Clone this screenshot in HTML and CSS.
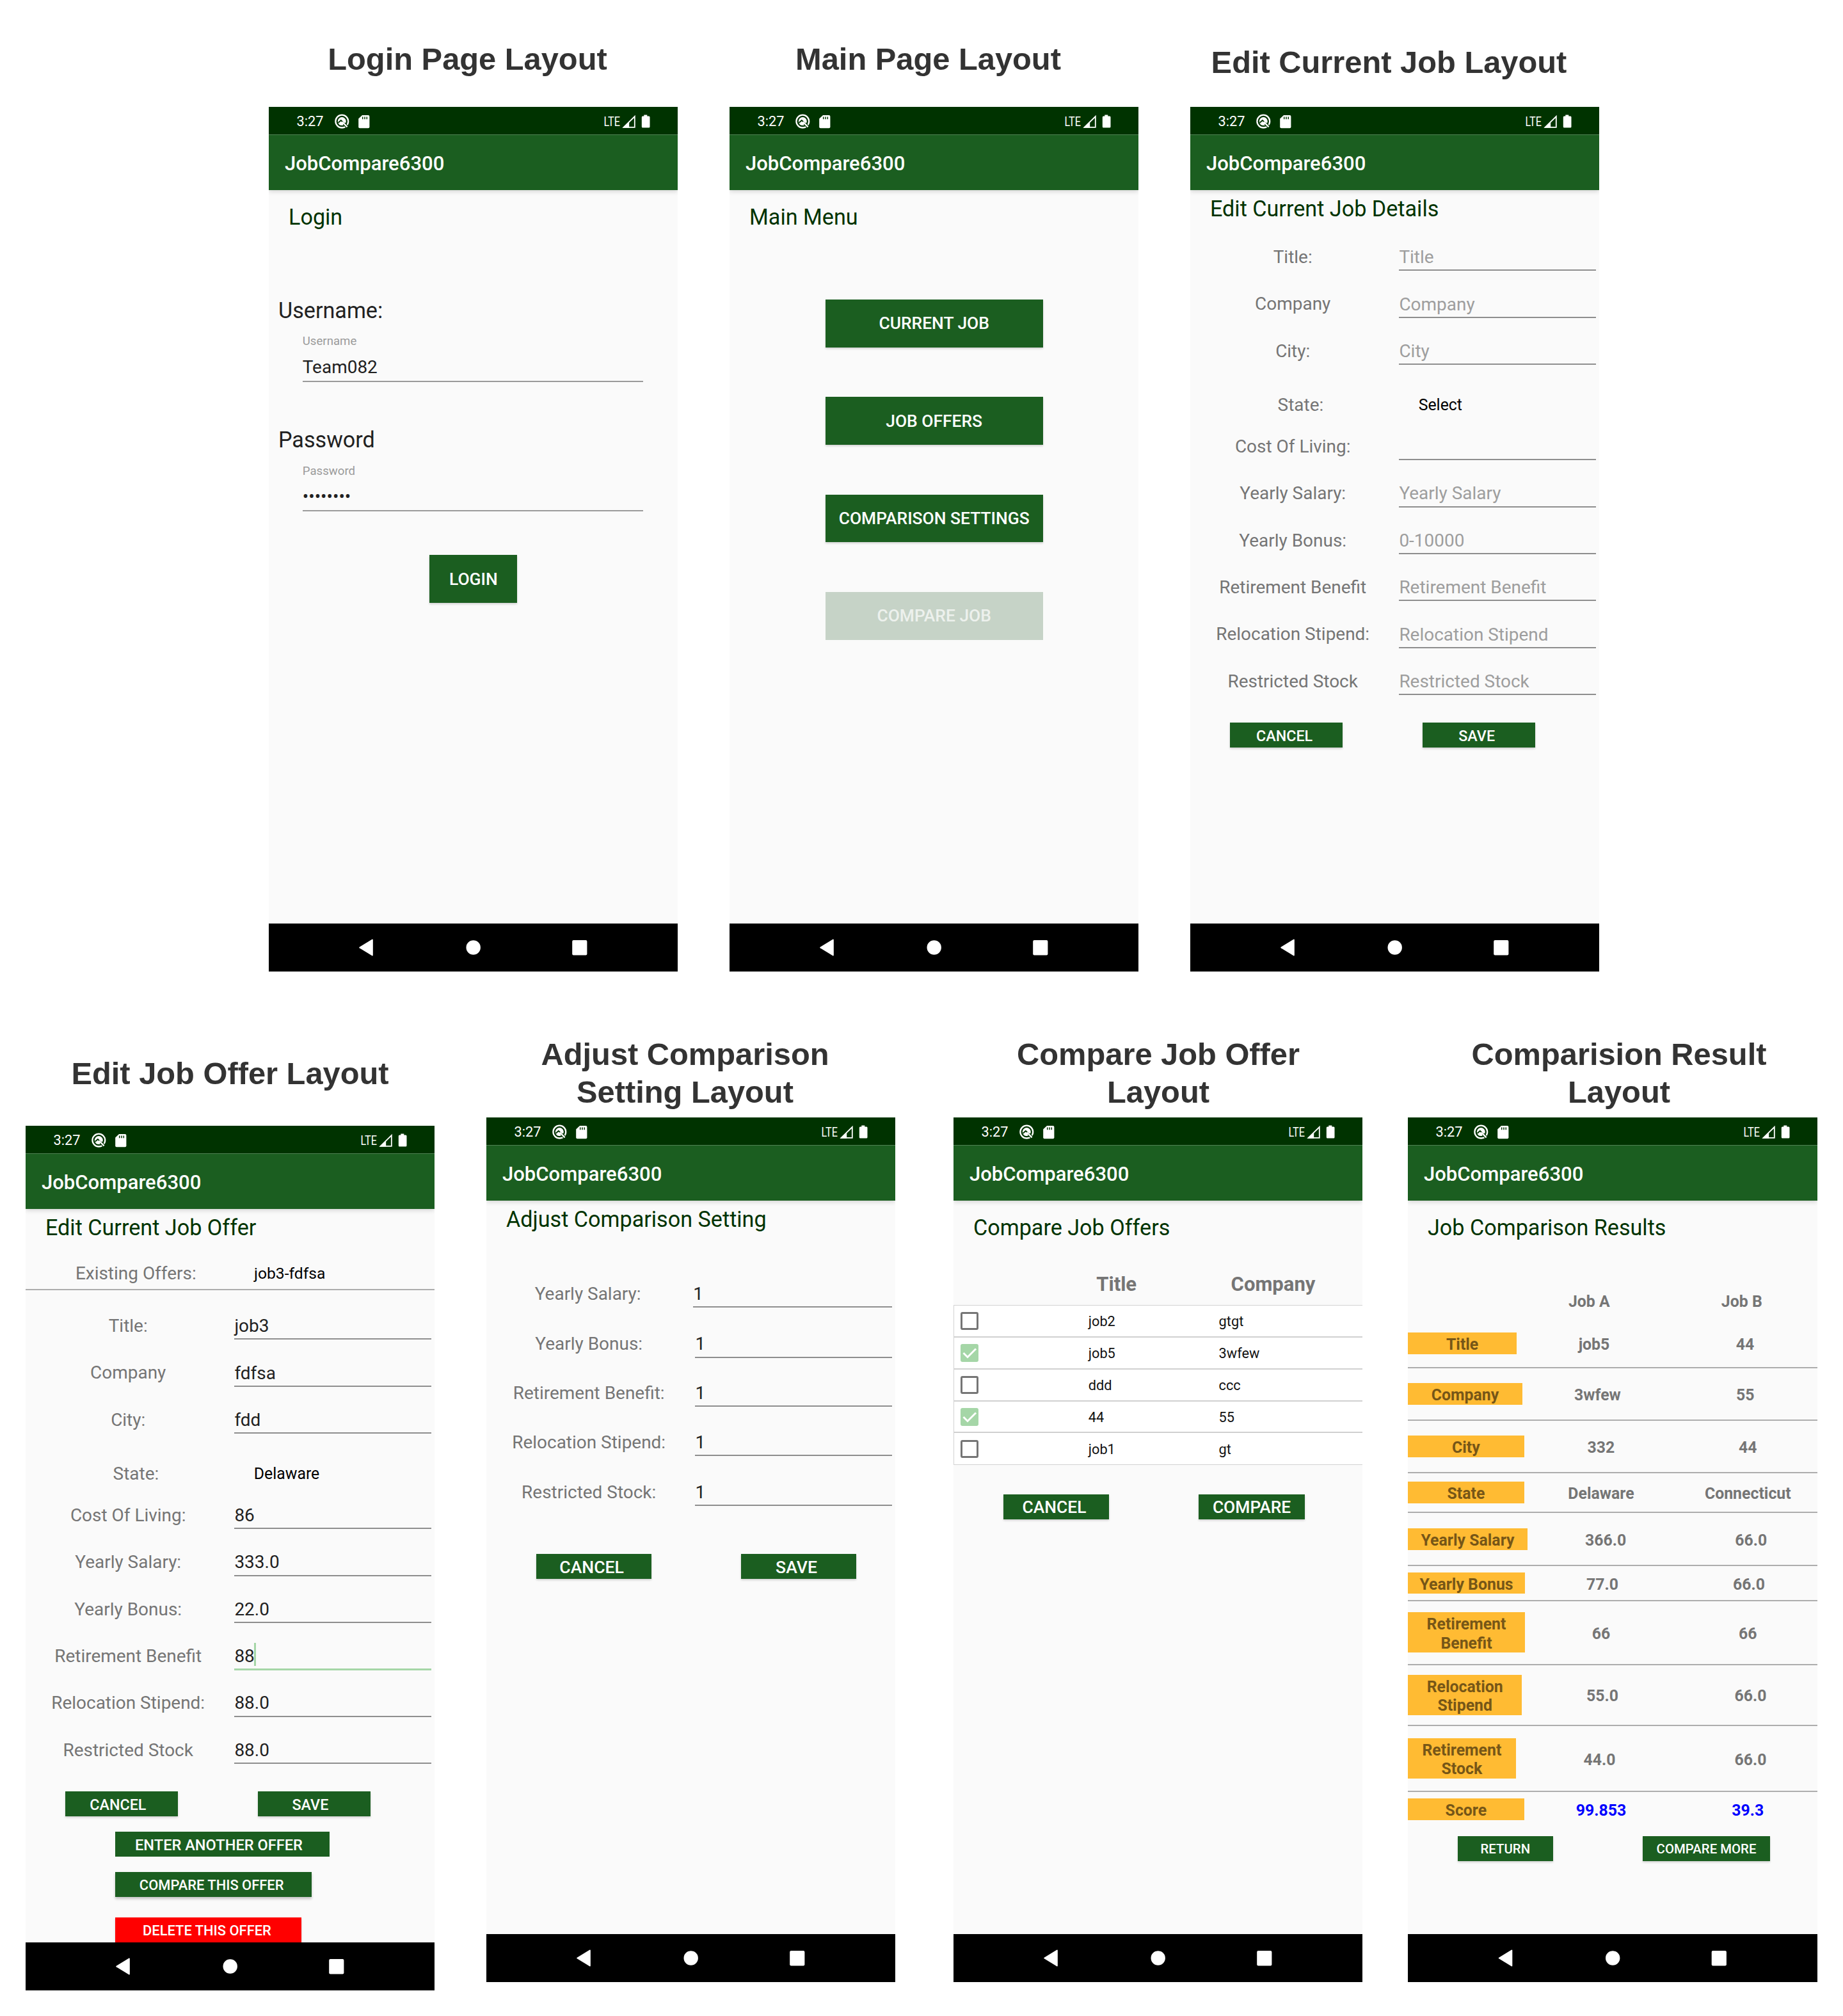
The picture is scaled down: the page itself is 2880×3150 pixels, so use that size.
FILE: index.html
```html
<!DOCTYPE html>
<html lang="en">
<head>
<meta charset="utf-8">
<title>JobCompare6300 layouts</title>
<link rel="stylesheet" href="styles.css">
</head>
<body>
<svg class="defs" width="0" height="0" aria-hidden="true">
  <symbol id="status-icons" viewBox="0 0 60 44">
    <circle cx="14.3" cy="22.6" r="9.900" fill="none" stroke="#fff" stroke-width="2.300"/>
    <circle cx="14.3" cy="22.6" r="6.500" fill="#fff"/>
    <path d="M17.500 26l6 6.500" fill="none" stroke="#030" stroke-width="4.600"/>
    <path d="M8.600 24.800l4.200-3.800 5 4.600" fill="none" stroke="#030" stroke-width="1.900"/>
    <path d="M14.800 23.200l7.800 8.200" fill="none" stroke="#fff" stroke-width="2.300"/>
    <path d="M46 13h9.4a2 2 0 0 1 2 2v16.200a2 2 0 0 1-2 2H42.200a2 2 0 0 1-2-2V18.600z" fill="#fff"/>
    <path d="M46.700 15.400v3.800M50 15.400v3.800M53.300 15.400v3.800" stroke="#030" stroke-width="1.500"/>
  </symbol>
  <symbol id="signal-icons" viewBox="0 0 76 44">
    <text x="0.500" y="29.900" font-family="Roboto, sans-serif" font-size="20" fill="#fff" textLength="25.500" lengthAdjust="spacingAndGlyphs">LTE</text>
    <path d="M31.500 31.900L48.800 15V31.900z" fill="none" stroke="#fff" stroke-width="1.800"/>
    <path d="M30 32.800L40.200 22.800V32.800z" fill="#fff"/>
    <path d="M63.300 12.400h5v2.200h2.700a1.500 1.500 0 0 1 1.500 1.500v15a1.500 1.500 0 0 1-1.500 1.500H61.300a1.500 1.500 0 0 1-1.500-1.500v-15a1.500 1.500 0 0 1 1.500-1.500h2z" fill="#fff"/>
  </symbol>
  <symbol id="nav-icons" viewBox="0 0 639 75">
    <path d="M162.800 25.500v24a1 1 0 0 1-1.500 .8l-19.600-12a1 1 0 0 1 0-1.600l19.600-12a1 1 0 0 1 1.500 .8z" fill="#fff"/>
    <circle cx="319.700" cy="37.500" r="11.200" fill="#fff"/>
    <rect x="474.200" y="26" width="23.200" height="23.400" rx="2" fill="#fff"/>
  </symbol>
</svg>

<main class="board">
  <div class="row row-top">
    <section class="layout">
      <h2 class="caption">Login Page Layout</h2>
      <div class="phone">
        <div class="status"><span class="clock">3:27</span><svg class="status-left"><use href="#status-icons"/></svg><svg class="status-right"><use href="#signal-icons"/></svg></div>
        <div class="appbar">JobCompare6300</div>
        <div class="content">
          <h3 class="heading heading-tall">Login</h3>
          <div class="login-label">Username:</div>
          <div class="login-field"><span class="hint">Username</span><span class="login-value">Team082</span></div>
          <div class="login-label login-label-second">Password</div>
          <div class="login-field"><span class="hint">Password</span><span class="login-value">••••••••</span></div>
          <button class="btn btn-login">LOGIN</button>
        </div>
        <svg class="nav"><use href="#nav-icons"/></svg>
      </div>
    </section>

    <section class="layout">
      <h2 class="caption">Main Page Layout</h2>
      <div class="phone">
        <div class="status"><span class="clock">3:27</span><svg class="status-left"><use href="#status-icons"/></svg><svg class="status-right"><use href="#signal-icons"/></svg></div>
        <div class="appbar">JobCompare6300</div>
        <div class="content">
          <h3 class="heading heading-tall">Main Menu</h3>
          <div class="menu">
            <button class="btn btn-menu">CURRENT JOB</button>
            <button class="btn btn-menu">JOB OFFERS</button>
            <button class="btn btn-menu">COMPARISON SETTINGS</button>
            <button class="btn btn-menu btn-disabled">COMPARE JOB</button>
          </div>
        </div>
        <svg class="nav"><use href="#nav-icons"/></svg>
      </div>
    </section>

    <section class="layout">
      <h2 class="caption caption-low">Edit Current Job Layout</h2>
      <div class="phone">
        <div class="status"><span class="clock">3:27</span><svg class="status-left"><use href="#status-icons"/></svg><svg class="status-right"><use href="#signal-icons"/></svg></div>
        <div class="appbar">JobCompare6300</div>
        <div class="content">
          <h3 class="heading">Edit Current Job Details</h3>
          <div class="form">
            <div class="field"><span class="label">Title:</span><span class="input placeholder">Title</span></div>
            <div class="field"><span class="label">Company</span><span class="input placeholder">Company</span></div>
            <div class="field"><span class="label">City:</span><span class="input placeholder">City</span></div>
            <div class="field field-state"><span class="label">State:</span><span class="select">Select</span></div>
            <div class="field"><span class="label">Cost Of Living:</span><span class="input"></span></div>
            <div class="field"><span class="label">Yearly Salary:</span><span class="input placeholder">Yearly Salary</span></div>
            <div class="field"><span class="label">Yearly Bonus:</span><span class="input placeholder">0-10000</span></div>
            <div class="field"><span class="label">Retirement Benefit</span><span class="input placeholder">Retirement Benefit</span></div>
            <div class="field"><span class="label">Relocation Stipend:</span><span class="input placeholder">Relocation Stipend</span></div>
            <div class="field"><span class="label">Restricted Stock</span><span class="input placeholder">Restricted Stock</span></div>
          </div>
          <div class="actions actions-edit">
            <button class="btn btn-edit btn-edit-current">CANCEL</button>
            <button class="btn btn-edit btn-edit-current">SAVE</button>
          </div>
        </div>
        <svg class="nav"><use href="#nav-icons"/></svg>
      </div>
    </section>
  </div>

  <div class="row row-bottom">
    <section class="layout layout-offer">
      <h2 class="caption caption-offer">Edit Job Offer Layout</h2>
      <div class="phone">
        <div class="status"><span class="clock">3:27</span><svg class="status-left"><use href="#status-icons"/></svg><svg class="status-right"><use href="#signal-icons"/></svg></div>
        <div class="appbar">JobCompare6300</div>
        <div class="content">
          <h3 class="heading">Edit Current Job Offer</h3>
          <div class="existing"><span class="existing-label">Existing Offers:</span><span class="existing-value">job3-fdfsa</span></div>
          <div class="form">
            <div class="field"><span class="label">Title:</span><span class="input">job3</span></div>
            <div class="field"><span class="label">Company</span><span class="input">fdfsa</span></div>
            <div class="field"><span class="label">City:</span><span class="input">fdd</span></div>
            <div class="field field-state"><span class="label">State:</span><span class="select">Delaware</span></div>
            <div class="field"><span class="label">Cost Of Living:</span><span class="input">86</span></div>
            <div class="field"><span class="label">Yearly Salary:</span><span class="input">333.0</span></div>
            <div class="field"><span class="label">Yearly Bonus:</span><span class="input">22.0</span></div>
            <div class="field"><span class="label">Retirement Benefit</span><span class="input input-active">88<i class="caret"></i></span></div>
            <div class="field"><span class="label">Relocation Stipend:</span><span class="input">88.0</span></div>
            <div class="field"><span class="label">Restricted Stock</span><span class="input">88.0</span></div>
          </div>
          <div class="actions actions-edit">
            <button class="btn btn-edit btn-edit-offer">CANCEL</button>
            <button class="btn btn-edit btn-edit-offer">SAVE</button>
          </div>
          <div class="offer-actions">
            <button class="btn btn-enter">ENTER ANOTHER OFFER</button>
            <button class="btn btn-compare-this">COMPARE THIS OFFER</button>
            <button class="btn btn-delete">DELETE THIS OFFER</button>
          </div>
        </div>
        <svg class="nav"><use href="#nav-icons"/></svg>
      </div>
    </section>

    <section class="layout">
      <h2 class="caption">Adjust Comparison<br>Setting Layout</h2>
      <div class="phone">
        <div class="status"><span class="clock">3:27</span><svg class="status-left"><use href="#status-icons"/></svg><svg class="status-right"><use href="#signal-icons"/></svg></div>
        <div class="appbar">JobCompare6300</div>
        <div class="content">
          <h3 class="heading">Adjust Comparison Setting</h3>
          <div class="form form-settings">
            <div class="field set-salary"><span class="label">Yearly Salary:</span><span class="input">1</span></div>
            <div class="field set-bonus"><span class="label">Yearly Bonus:</span><span class="input">1</span></div>
            <div class="field set-retirement"><span class="label">Retirement Benefit:</span><span class="input">1</span></div>
            <div class="field set-relocation"><span class="label">Relocation Stipend:</span><span class="input">1</span></div>
            <div class="field set-stock"><span class="label">Restricted Stock:</span><span class="input">1</span></div>
          </div>
          <div class="actions actions-settings">
            <button class="btn btn-settings">CANCEL</button>
            <button class="btn btn-settings">SAVE</button>
          </div>
        </div>
        <svg class="nav"><use href="#nav-icons"/></svg>
      </div>
    </section>

    <section class="layout">
      <h2 class="caption caption-center">Compare Job Offer<br>Layout</h2>
      <div class="phone">
        <div class="status"><span class="clock">3:27</span><svg class="status-left"><use href="#status-icons"/></svg><svg class="status-right"><use href="#signal-icons"/></svg></div>
        <div class="appbar">JobCompare6300</div>
        <div class="content">
          <h3 class="heading heading-tall">Compare Job Offers</h3>
          <div class="offers-head"><span>Title</span><span>Company</span></div>
          <div class="offers">
            <div class="offer"><span class="box"></span><span>job2</span><span>gtgt</span></div>
            <div class="offer"><span class="box box-on"><svg viewBox="0 0 28 28"><path d="M4.500 14l6.500 6.500L24 7.500" fill="none" stroke="#fff" stroke-width="3"/></svg></span><span>job5</span><span>3wfew</span></div>
            <div class="offer"><span class="box"></span><span>ddd</span><span>ccc</span></div>
            <div class="offer"><span class="box box-on"><svg viewBox="0 0 28 28"><path d="M4.500 14l6.500 6.500L24 7.500" fill="none" stroke="#fff" stroke-width="3"/></svg></span><span>44</span><span>55</span></div>
            <div class="offer"><span class="box"></span><span>job1</span><span>gt</span></div>
          </div>
          <div class="actions actions-compare">
            <button class="btn btn-compare btn-compare-cancel">CANCEL</button>
            <button class="btn btn-compare">COMPARE</button>
          </div>
        </div>
        <svg class="nav"><use href="#nav-icons"/></svg>
      </div>
    </section>

    <section class="layout">
      <h2 class="caption caption-right">Comparision Result<br>Layout</h2>
      <div class="phone phone-wide">
        <div class="status"><span class="clock">3:27</span><svg class="status-left"><use href="#status-icons"/></svg><svg class="status-right"><use href="#signal-icons"/></svg></div>
        <div class="appbar">JobCompare6300</div>
        <div class="content">
          <h3 class="heading heading-tall">Job Comparison Results</h3>
          <div class="result-head"><span>Job A</span><span>Job B</span></div>
          <div class="result r-title"><span class="tag">Title</span><span>job5</span><span>44</span></div>
          <div class="result r-company"><span class="tag">Company</span><span>3wfew</span><span>55</span></div>
          <div class="result r-city"><span class="tag">City</span><span>332</span><span>44</span></div>
          <div class="result r-state"><span class="tag">State</span><span>Delaware</span><span>Connecticut</span></div>
          <div class="result r-salary"><span class="tag">Yearly Salary</span><span>366.0</span><span>66.0</span></div>
          <div class="result r-bonus"><span class="tag">Yearly Bonus</span><span>77.0</span><span>66.0</span></div>
          <div class="result r-retirement"><span class="tag">Retirement<br>Benefit</span><span>66</span><span>66</span></div>
          <div class="result r-relocation"><span class="tag">Relocation<br>Stipend</span><span>55.0</span><span>66.0</span></div>
          <div class="result r-stock"><span class="tag">Retirement<br>Stock</span><span>44.0</span><span>66.0</span></div>
          <div class="result r-score"><span class="tag">Score</span><span>99.853</span><span>39.3</span></div>
          <div class="actions actions-result">
            <button class="btn btn-return">RETURN</button>
            <button class="btn btn-more">COMPARE MORE</button>
          </div>
        </div>
        <svg class="nav"><use href="#nav-icons"/></svg>
      </div>
    </section>
  </div>
</main>
</body>
</html>
```

FILE: styles.css
```css
* { box-sizing: border-box; }

body {
  margin: 0;
  background: #fff;
  font-family: Roboto, sans-serif;
}

.defs { display: none; }

.board { width: 2880px; height: 3150px; overflow: hidden; }

.row { display: grid; }

.row-top {
  grid-template-columns: 720px 720px 640px;
  padding-left: 420px;
  height: 1618px;
}

.row-bottom {
  grid-template-columns: 720px 730px 710px 640px;
  padding-left: 40px;
}

/* Captions over each phone */
.caption {
  margin: 0;
  width: 621px;
  color: #333;
  font: bold 48.8px/58.67px "Liberation Sans", Arial, sans-serif;
  text-align: center;
  white-space: nowrap;
}

.row-top .caption { height: 167px; padding-top: 63px; }
.row-top .caption-low { padding-top: 68px; }
.row-bottom .caption { height: 128px; }
.row-bottom .caption-offer { width: 639px; height: 141px; padding-top: 30px; }
.row-bottom .caption-center { width: 640px; }
.row-bottom .caption-right { width: 660px; }

/* Phone frame */
.phone {
  display: flex;
  flex-direction: column;
  width: 639px;
  height: 1351px;
  background: #fafafa;
}

.phone-wide { width: 640px; }

.status {
  display: flex;
  align-items: center;
  flex: none;
  height: 43.3px;
  padding-left: 43.5px;
  background: #030;
  color: #fff;
}

.clock { width: 56.5px; font-size: 21.75px; line-height: 46px; padding-top: 3px; }
.status-left { width: 60px; height: 44px; }
.status-right { width: 76px; height: 44px; margin-left: auto; margin-right: 40px; }

.appbar {
  position: relative;
  flex: none;
  height: 86.7px;
  padding-left: 25px;
  background: #1b5e20;
  box-shadow: 0 2px 7px rgba(0, 0, 0, .16);
  clip-path: inset(0 0 -14px 0);
  color: #fff;
  font-size: 31.06px;
  font-weight: 500;
  line-height: 91px;
}

.content { height: 1146px; overflow: hidden; flex: 1; }
.nav { flex: none; width: 639px; height: 75px; background: #000; }
.phone-wide .nav { width: 640px; }

.heading {
  margin: 0;
  height: 53.1px;
  padding: 5px 0 0 31px;
  color: #030;
  font-size: 34.17px;
  font-weight: 400;
  line-height: 49.6px;
}

.heading-tall { height: 66px; padding-top: 17.6px; }

/* Buttons */
.btn {
  display: block;
  margin: 0;
  padding: 0;
  border: 0;
  background: #1b5e20;
  box-shadow: 0 2px 3px rgba(0, 0, 0, .16);
  color: #fff;
  font-family: Roboto, sans-serif;
  font-weight: 500;
  white-space: nowrap;
}

.actions { display: flex; }
.actions .btn,
.offer-actions .btn { padding-top: 2px; }

/* Login */
.login-label {
  margin-top: 100px;
  height: 44px;
  padding-left: 15px;
  color: #212121;
  font-size: 34.17px;
  line-height: 44px;
}

.login-label-second { margin-top: 68.4px; }

.login-field {
  display: flex;
  flex-direction: column;
  width: 532.2px;
  height: 90px;
  margin-left: 52.8px;
  border-bottom: 2px solid #9a9a9a;
  color: #212121;
}

.hint { height: 52px; padding-top: 13.2px; color: #9b9b9b; font-size: 18.64px; line-height: 27px; }
.login-value { margin-top: -5px; font-size: 27.96px; line-height: 42px; }

.btn-login { width: 137px; height: 74.6px; margin: 68px 0 0 251.4px; font-size: 26.4px; }

/* Main menu */
.menu {
  display: flex;
  flex-direction: column;
  gap: 77.8px;
  margin: 105px 0 0 149.6px;
  width: 340.2px;
}

.btn-menu { height: 74.6px; font-size: 26.4px; }
.btn-disabled { background: #c6d3c7; box-shadow: none; color: #edf1ed; }

/* Forms */
.field {
  display: flex;
  align-items: flex-end;
  height: 73.4px;
  font-size: 27.96px;
  line-height: 40.6px;
}

.label { width: 326.4px; padding: 0 6px .8px 0; color: #757575; text-align: center; white-space: nowrap; }

.input {
  display: flex;
  align-items: center;
  width: 307.2px;
  height: 42.6px;
  padding-top: 2.6px;
  border-bottom: 2px solid #8e8e8e;
  color: #212121;
}

.placeholder { color: #9e9e9e; }
.input-active { height: 43.1px; margin-bottom: -.5px; border-bottom: 3px solid #a5d6a7; }
.caret { width: 3px; height: 36px; margin: 0 0 6px -1px; background: #a5d6a7; }

.field-state { height: 75.6px; line-height: 27.2px; }
.field-state .label { padding: 0 0 0 18.4px; }
.select { padding-left: 30.3px; color: #000; font-size: 24.85px; }

.actions-edit { margin: 43.2px 0 0 62px; gap: 124.4px; }
.btn-edit { width: 176.2px; height: 38.8px; font-size: 23.3px; }
.btn-edit-current { padding-right: 6px; }
.btn-edit-offer { padding-right: 11.5px; }

.existing {
  display: flex;
  height: 74.3px;
  margin-bottom: 3.7px;
  padding-top: 21.8px;
  border-bottom: 2px solid #adadad;
  font-size: 27.96px;
  line-height: 52px;
}

.existing-label { width: 357px; padding-right: 12.4px; color: #757575; text-align: center; }
.existing-value { color: #000; font-size: 24.7px; }

.offer-actions { padding: 24px 0 0 139.8px; }
.btn-enter { width: 335.3px; height: 38.8px; padding-right: 11px; box-shadow: none; font-size: 23.6px; }
.btn-compare-this { width: 307.2px; height: 38.8px; margin-top: 24px; padding-right: 5.5px; font-size: 21.9px; box-shadow: 0 3px 4px rgba(0, 0, 0, .22); }
.btn-delete { width: 290.8px; height: 39px; margin-top: 32px; padding-right: 3.5px; background: #f00; font-size: 21.9px; }

/* Comparison settings */
.set-salary { height: 113.9px; }
.set-salary .label { width: 323.3px; padding-right: 6px; }
.set-salary .input { width: 310.3px; }
.set-bonus { height: 78.6px; }
.set-retirement { height: 76.4px; }
.set-relocation { height: 77px; }
.set-stock { height: 78.5px; }

.actions-settings { margin: 74.2px 0 0 77.8px; gap: 139.7px; }
.btn-settings { width: 180.2px; height: 39px; padding-right: 6.5px; font-size: 26.6px; }

/* Offer list */
.offers-head {
  display: flex;
  height: 97.3px;
  padding-left: 223.2px;
  color: #757575;
  font-size: 31.06px;
  font-weight: 700;
  line-height: 129px;
}

.offers-head span:first-child { width: 210.4px; }

.offers {
  background: #fff;
  border: 1px solid #d2d2d2;
  border-width: 1.5px 0 1.5px 1px;
}

.offer {
  display: grid;
  grid-template-columns: 199.8px 203.8px 1fr;
  align-items: center;
  height: 49.8px;
  padding-left: 10px;
  border-bottom: 2px solid #d0d0d0;
  color: #111;
  font-size: 21.75px;
}

.offer span:not(.box) { padding-top: 1.5px; }
.offer:last-child { border-bottom: 0; height: 48.5px; }
.box { display: block; width: 28px; height: 28px; border: 3px solid #757575; border-radius: 3px; }
.box-on { border: 0; background: #a5d6a7; }
.box-on svg { display: block; width: 28px; height: 28px; }

.actions-compare { margin: 45.8px 0 0 77.6px; gap: 139.8px; }
.btn-compare { width: 165.8px; height: 38.8px; font-size: 26.4px; }
.btn-compare-cancel { padding-right: 6px; }

/* Comparison results */
.result-head {
  display: grid;
  grid-template-columns: 239px 238px;
  height: 120.1px;
  padding-left: 163.8px;
  color: #757575;
  font-size: 24.85px;
  font-weight: 700;
  line-height: 183px;
  text-align: center;
}

.result {
  display: grid;
  align-items: center;
  border-bottom: 2px solid #adadad;
  color: #757575;
  font-size: 24.85px;
  font-weight: 700;
  line-height: 29.2px;
  text-align: center;
}

.result > span { padding: 4px 0 .6px; }
.result > .tag { background: #fb3; color: #765617; }

.r-title { grid-template-columns: 170.2px 241.6px 230.4px; height: 75.5px; }
.r-company { grid-template-columns: 179px 235px 226.6px; height: 82.6px; }
.r-city { grid-template-columns: 181.8px 240.4px 218.2px; height: 81.6px; }
.r-state { grid-template-columns: 181.8px 240.4px 218.2px; height: 62.6px; }
.r-salary { grid-template-columns: 187px 244.4px 209.8px; height: 82.6px; }
.r-bonus { grid-template-columns: 183px 242px 216px; height: 55px; }
.r-retirement { grid-template-columns: 183px 238px 220.6px; height: 99.8px; }
.r-relocation { grid-template-columns: 178.4px 251.2px 212px; height: 95.2px; }
.r-stock { grid-template-columns: 168.8px 261.6px 210.4px; height: 103.3px; }
.r-score { grid-template-columns: 181.8px 240.4px 218.2px; height: 53px; border-bottom: 0; }
.r-score span:not(.tag) { color: #00f; }

.actions-result { margin: 15.7px 0 0 77.8px; gap: 140.1px; }
.btn-return { width: 149.1px; height: 38.8px; font-size: 20.4px; }
.btn-more { width: 199.1px; height: 38.8px; font-size: 20.4px; }
```
